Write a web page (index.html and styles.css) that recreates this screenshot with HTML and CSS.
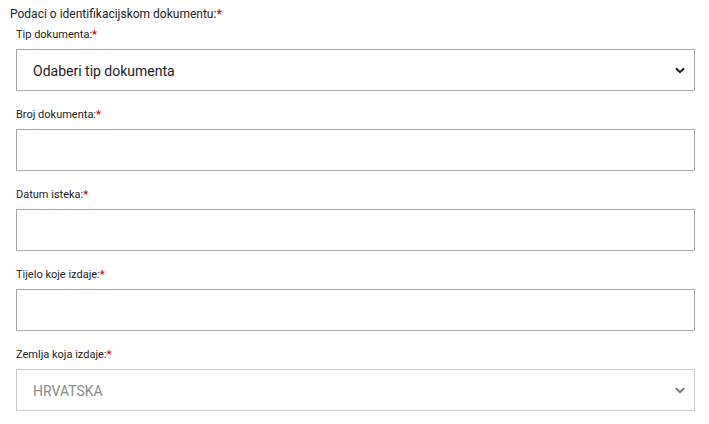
FILE: index.html
```html
<!DOCTYPE html>
<html lang="hr">
<head>
  <meta charset="UTF-8" />
  <title>Podaci o identifikacijskom dokumentu</title>
  <link rel="stylesheet" href="styles.css">
</head>
<body>
  <form class="doc-form">
    <h2 class="section-title">Podaci o identifikacijskom dokumentu:<span class="req">*</span></h2>
    <div class="field">
      <label class="field-label">Tip dokumenta:<span class="req">*</span></label>
      <div class="select">
        <span class="select-value">Odaberi tip dokumenta</span>
        <svg class="chevron" width="10" height="7" viewBox="0 0 10 7"><path d="M1 1.2 5 5.2 9 1.2" fill="none" stroke="#222" stroke-width="2"/></svg>
      </div>
    </div>
    <div class="field">
      <label class="field-label">Broj dokumenta:<span class="req">*</span></label>
      <div class="input"></div>
    </div>
    <div class="field">
      <label class="field-label">Datum isteka:<span class="req">*</span></label>
      <div class="input"></div>
    </div>
    <div class="field">
      <label class="field-label">Tijelo koje izdaje:<span class="req">*</span></label>
      <div class="input"></div>
    </div>
    <div class="field">
      <label class="field-label">Zemlja koja izdaje:<span class="req">*</span></label>
      <div class="select disabled">
        <span class="select-value">HRVATSKA</span>
        <svg class="chevron" width="10" height="7" viewBox="0 0 10 7"><path d="M1 1.2 5 5.2 9 1.2" fill="none" stroke="#777" stroke-width="2"/></svg>
      </div>
    </div>
  </form>
</body>
</html>
```

FILE: styles.css
```css
body {
  margin: 0;
  padding: 0;
  background-color: #fff;
  font-family: Roboto, 'Liberation Sans', sans-serif;
  color: #222;
}
.doc-form {
  padding: 7px 14px 0 10px;
}
.section-title {
  margin: 0 0 6px;
  font-size: 12px;
  font-weight: 400;
  line-height: 15px;
}
.req {
  color: #d0021b;
  font-weight: 700;
}
.field {
  padding-left: 6px;
  margin-bottom: 17px;
}
.field-label {
  display: block;
  font-size: 11px;
  line-height: 14px;
  margin-bottom: 7px;
}
.select, .input {
  box-sizing: border-box;
  height: 42px;
  border: 1px solid #a9a9a9;
  background: #fff;
}
.select {
  display: flex;
  align-items: center;
  justify-content: space-between;
  padding: 0 9px 0 16px;
}
.select-value {
  font-size: 14px;
  padding-top: 1px;
}
.select.disabled {
  border-color: #c8c8c8;
}
.select.disabled .select-value {
  color: #8a8a8a;
}
```
